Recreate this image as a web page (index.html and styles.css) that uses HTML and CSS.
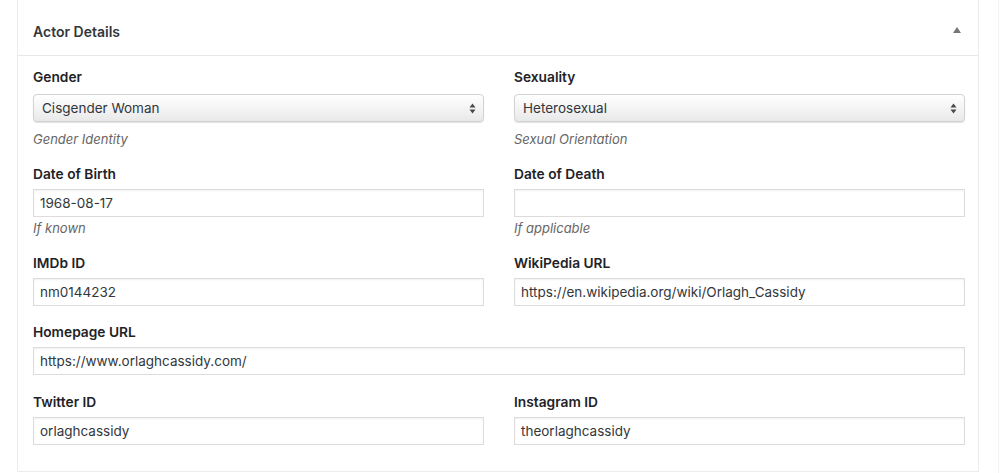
FILE: index.html
```html
<!DOCTYPE html>
<html lang="en">
<head>
<meta charset="utf-8">
<title>Actor Details</title>
<link rel="stylesheet" href="styles.css">
</head>
<body>
<div class="page">
  <section class="postbox">
    <header class="postbox-header">
      <h2 class="postbox-title">Actor Details</h2>
      <span class="toggle" aria-hidden="true"></span>
    </header>
    <div class="fields">
      <div class="field">
        <label class="field-label">Gender</label>
        <div class="select">
          <span class="select-value">Cisgender Woman</span>
          <svg class="select-arrows" width="7" height="11" viewBox="0 0 7 11"><path d="M3.5 0.5 L6.5 4.5 L0.5 4.5 Z M0.5 6.5 L6.5 6.5 L3.5 10.5 Z" fill="#4a4a4a"/></svg>
        </div>
        <p class="desc desc-select">Gender Identity</p>
      </div>
      <div class="field">
        <label class="field-label">Sexuality</label>
        <div class="select">
          <span class="select-value">Heterosexual</span>
          <svg class="select-arrows" width="7" height="11" viewBox="0 0 7 11"><path d="M3.5 0.5 L6.5 4.5 L0.5 4.5 Z M0.5 6.5 L6.5 6.5 L3.5 10.5 Z" fill="#4a4a4a"/></svg>
        </div>
        <p class="desc desc-select">Sexual Orientation</p>
      </div>
      <div class="field">
        <label class="field-label">Date of Birth</label>
        <div class="input">1968-08-17</div>
        <p class="desc">If known</p>
      </div>
      <div class="field">
        <label class="field-label">Date of Death</label>
        <div class="input"></div>
        <p class="desc">If applicable</p>
      </div>
      <div class="field">
        <label class="field-label">IMDb ID</label>
        <div class="input">nm0144232</div>
      </div>
      <div class="field">
        <label class="field-label">WikiPedia URL</label>
        <div class="input">https://en.wikipedia.org/wiki/Orlagh_Cassidy</div>
      </div>
      <div class="field field-wide">
        <label class="field-label">Homepage URL</label>
        <div class="input">https://www.orlaghcassidy.com/</div>
      </div>
      <div class="field">
        <label class="field-label">Twitter ID</label>
        <div class="input">orlaghcassidy</div>
      </div>
      <div class="field">
        <label class="field-label">Instagram ID</label>
        <div class="input">theorlaghcassidy</div>
      </div>
    </div>
  </section>
</div>
</body>
</html>
```

FILE: styles.css
```css
html, body {
  margin: 0;
  padding: 0;
  background: #fff;
}
body {
  font-family: Inter, Roboto, "Liberation Sans", Arial, sans-serif;
  color: #23282d;
  font-size: 13px;
  width: 1000px;
  height: 473px;
  overflow: hidden;
}
*, *::before, *::after {
  box-sizing: border-box;
}
.page {
  width: 999px;
  height: 473px;
  padding: 0 19px 0 17px;
  border-right: 1px solid #f3f3f3;
}
.postbox {
  width: 962px;
  border: 1px solid #ececec;
  border-top: none;
  background: #fff;
}
.postbox-header {
  height: 56px;
  border-bottom: 1px solid #e6e6e6;
  display: flex;
  align-items: center;
  justify-content: space-between;
  padding: 0 17px 0 15px;
}
.postbox-title {
  margin: 8px 0 0;
  font-size: 14px;
  font-weight: 600;
  color: #32373c;
}
.toggle {
  width: 0;
  height: 0;
  border-left: 4px solid transparent;
  border-right: 4px solid transparent;
  border-bottom: 6px solid #72777c;
  margin-top: 4px;
}
.fields {
  display: grid;
  grid-template-columns: 451px 451px;
  column-gap: 30px;
  row-gap: 17px;
  padding: 12px 12px 26px 15px;
}
.field {
  display: flex;
  flex-direction: column;
}
.field-wide {
  grid-column: 1 / 3;
  margin-bottom: 1px;
}
.field-label {
  font-weight: 600;
  font-size: 13.75px;
  line-height: 18px;
  color: #1f2327;
  margin-bottom: 6px;
}
.select {
  height: 28px;
  margin-top: 2px;
  border-radius: 4px;
  border: 1px solid #d2d2d2;
  background: linear-gradient(#ffffff, #f4f4f4 50%, #e9e9e9);
  box-shadow: 0 1px 1px rgba(0,0,0,0.12);
  display: flex;
  align-items: center;
  justify-content: space-between;
  padding: 0 7px 0 8px;
  font-size: 13.5px;
  color: #32373c;
}
.select-arrows {
  display: block;
}
.input {
  height: 28px;
  border: 1px solid #dcdcdc;
  box-shadow: inset 0 1px 2px rgba(0,0,0,0.06);
  background: #fff;
  font-size: 13.5px;
  line-height: 26px;
  padding: 0 6px;
  color: #32373c;
}
.desc {
  margin: 2px 0 0;
  font-style: italic;
  font-size: 13px;
  line-height: 18px;
  color: #666;
}
.desc-select {
  margin-top: 8px;
}
```
